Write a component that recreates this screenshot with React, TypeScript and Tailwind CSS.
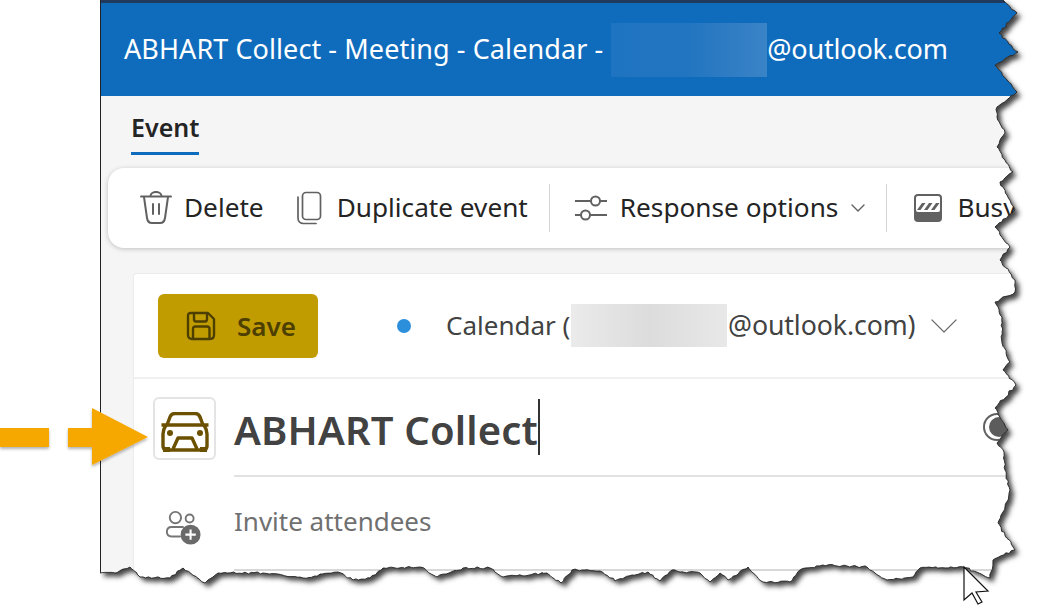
import React from "react";

// key points of the torn screenshot edge, read off the picture
const tear: [number, number][] = [
  [1003, 0], [1017, 13], [999, 33], [1018, 52], [995, 65], [1007, 80], [1017, 92], [997, 107], [997, 117],
  [1005, 133], [997, 147], [1013, 172], [1000, 182], [1007, 195], [1015, 210], [995, 227], [1010, 247],
  [1000, 260], [1015, 280], [1015, 292], [995, 302], [1002, 317], [1002, 343], [1010, 362], [1003, 370],
  [1016, 385], [995, 408], [1008, 430], [997, 443], [1004, 452], [1005, 470], [1010, 490], [1005, 507],
  [998, 523], [1015, 550], [993, 560], [990, 578], [963, 567], [920, 568], [913, 577], [887, 580],
  [875, 573], [867, 567], [823, 565], [800, 570], [790, 582], [763, 582], [748, 567], [728, 580],
  [720, 573], [710, 582], [700, 573], [680, 572], [672, 570], [660, 581], [648, 572], [632, 575],
  [615, 581], [600, 571], [585, 570], [572, 570], [561, 583], [547, 573], [503, 577], [490, 568],
  [463, 568], [437, 577], [420, 567], [383, 568], [370, 578], [353, 580], [338, 572], [303, 578],
  [263, 573], [218, 573], [205, 583], [183, 568], [170, 578], [140, 577], [130, 567], [115, 573], [100, 573],
];

// breaks the straight runs up a little so the line looks rough
function roughen(points: [number, number][]) {
  let seed = 7;
  const next = () => {
    seed = (seed * 9301 + 49297) % 233280;
    return seed / 233280 - 0.5;
  };
  let d = `M${points[0][0]} ${points[0][1]}`;
  for (let i = 1; i < points.length; i++) {
    const [ax, ay] = points[i - 1];
    const [bx, by] = points[i];
    const steps = Math.max(1, Math.round(Math.hypot(bx - ax, by - ay) / 3));
    for (let s = 1; s <= steps; s++) {
      const t = s / steps;
      const j = s === steps ? 0 : 2;
      d += `L${(ax + (bx - ax) * t + next() * j).toFixed(1)} ${(ay + (by - ay) * t + next() * j).toFixed(1)}`;
    }
  }
  return d;
}

const edge = roughen(tear);
const outside = `${edge}L100 608L1040 608L1040 0Z`;
const inside = `${edge}L100 0Z`;

function TornEdge() {
  return (
    <svg className="absolute inset-0" width={1040} height={608} viewBox="0 0 1040 608">
      <defs>
        <clipPath id="outside">
          <path d={outside} />
        </clipPath>
        <filter id="soft" x="-5%" y="-5%" width="110%" height="110%">
          <feGaussianBlur stdDeviation="2.4" />
        </filter>
      </defs>
      <path d={outside} fill="#fff" />
      <g clipPath="url(#outside)">
        <path d={inside} fill="#444" filter="url(#soft)" transform="translate(4 4)" />
      </g>
      <path d={edge} fill="none" stroke="#222" strokeWidth="0.9" />
      {/* mouse pointer */}
      <path d="M964 567V600L972 593L978 604L982 602L976 592L988 591Z" fill="#fff" stroke="#111" strokeWidth="1.2" strokeLinejoin="miter" />
    </svg>
  );
}

function Arrows() {
  return (
    <svg className="absolute left-0 top-[400px]" width={155} height={72} viewBox="0 0 155 72">
      <defs>
        <filter id="arrowShadow" x="-10%" y="-10%" width="120%" height="130%">
          <feDropShadow dx="0" dy="2" stdDeviation="1.5" floodColor="#000" floodOpacity="0.3" />
        </filter>
      </defs>
      <g fill="#f7a806" filter="url(#arrowShadow)">
        <rect x="0" y="28" width="49" height="19" />
        <path d="M68 28H92V8L148 37L92 65V47H68Z" />
      </g>
    </svg>
  );
}

function Chevron({ w, h, color, sw }: { w: number; h: number; color: string; sw: number }) {
  return (
    <svg width={w} height={h} viewBox={`0 0 ${w} ${h}`} fill="none" stroke={color} strokeWidth={sw} strokeLinecap="round" strokeLinejoin="round">
      <path d={`M1 1L${w / 2} ${h - 1}L${w - 1} 1`} />
    </svg>
  );
}

function TrashIcon() {
  return (
    <svg width={34} height={34} viewBox="0 0 34 34" fill="none" stroke="#616161" strokeWidth="2" strokeLinecap="round" strokeLinejoin="round">
      <path d="M2 5.5H32" />
      <path d="M11.5 5C11.5 -0.4 22.5 -0.4 22.5 5" />
      <path d="M5 6L8 27C8.5 30.5 10.5 32 13 32H21C23.5 32 25.5 30.5 26 27L29 6" />
      <path d="M14 13V23M20 13V23" />
    </svg>
  );
}

function DuplicateIcon() {
  return (
    <svg width={26} height={34} viewBox="0 0 26 34" fill="none" stroke="#616161" strokeWidth="1.7">
      <rect x="6.5" y="1.5" width="18" height="27" rx="3.5" />
      <path d="M2 6V27C2 30.5 4.5 32.5 7.5 32.5H20" strokeLinecap="round" />
    </svg>
  );
}

function SlidersIcon() {
  return (
    <svg width={32} height={30} viewBox="0 0 32 30" fill="none" stroke="#616161" strokeWidth="2">
      <path d="M0 8H16M25 8H32M0 22H6M15 22H32" />
      <circle cx="20.5" cy="8" r="4.5" />
      <circle cx="10.5" cy="22" r="4.5" />
    </svg>
  );
}

function BusyIcon() {
  return (
    <svg width={28} height={28} viewBox="0 0 28 28">
      <rect width="28" height="28" rx="4" fill="#616161" />
      <rect x="2" y="2" width="24" height="16" rx="2" fill="#fff" />
      <path d="M3 16L8 9H11.5L6.5 16ZM10 16L15 9H18.5L13.5 16ZM17 16L22 9H25.5L20.5 16Z" fill="#616161" />
    </svg>
  );
}

function SaveIcon() {
  return (
    <svg width={30} height={30} viewBox="0 0 30 30" fill="none" stroke="#4d3f00" strokeWidth="2.4" strokeLinejoin="round">
      <path d="M5 2H22L28 8V24C28 26.5 26.5 28 24 28H6C3.5 28 2 26.5 2 24V5C2 3 3 2 5 2Z" />
      <path d="M8 2V8C8 9.5 9 10.5 10 10.5H19C20.5 10.5 21 9.5 21 8V2" />
      <path d="M7 28V18C7 16.5 8 15.5 9.5 15.5H21C22.5 15.5 23.5 16.5 23.5 18V28" />
    </svg>
  );
}

function CarIcon() {
  return (
    <svg width={48} height={40} viewBox="0 0 48 40" fill="none" stroke="#6b5000" strokeWidth="3.4" strokeLinejoin="round">
      <path d="M6 13L9 5C10 2.5 12 1.5 14 1.5H34C36 1.5 38 2.5 39 5L42 13" />
      <path d="M0.5 13H47.5" />
      <path d="M5 13C2.5 17 2 19 2 22V34C2 36.5 3.5 38 6 38H42C44.5 38 46 36.5 46 34V22C46 19 45.5 17 43 13" />
      <path d="M12 37L17 26H31L36 37" />
      <path d="M2 35H9V40H2ZM39 35H46V40H39Z" fill="#6b5000" stroke="none" />
      <circle cx="9" cy="21" r="3" fill="#6b5000" stroke="none" />
      <circle cx="39" cy="21" r="3" fill="#6b5000" stroke="none" />
    </svg>
  );
}

function InviteIcon() {
  return (
    <svg width={36} height={36} viewBox="0 0 38 38" fill="none" stroke="#757575" strokeWidth="2">
      <circle cx="11" cy="8" r="6" />
      <circle cx="26" cy="9" r="4.2" />
      <path d="M19 18H7C4 18 2 20 2 23C2 26 4 28 7 28H16" strokeLinecap="round" />
      <circle cx="27" cy="26" r="10.5" fill="#6a6a6a" stroke="none" />
      <path d="M27 20.5V31.5M21.5 26H32.5" stroke="#fff" strokeWidth="2.2" />
    </svg>
  );
}

function ToolButton({ icon, label, gap }: { icon: React.ReactNode; label: string; gap: string }) {
  return (
    <div className={`flex items-center whitespace-nowrap text-[#242424] ${gap}`}>
      {icon}
      <span>{label}</span>
    </div>
  );
}

export default function App() {
  return (
    <div className="relative h-[608px] w-[1040px] overflow-hidden bg-white pl-[100px] font-['Noto_Sans','Open_Sans',sans-serif]">
      <div className="flex h-full flex-col border-l border-[#222] bg-[#f5f5f5]">
        <header className="flex h-[96px] shrink-0 items-center whitespace-nowrap border-t-[3px] border-[#1f3a5c] bg-[#0f6cbd] pl-[23px] text-[27px] text-white">
          <span className="tracking-[0.08px]">ABHART Collect - Meeting - Calendar -</span>
          <span className="ml-[8px] h-[54px] w-[156px] bg-gradient-to-r from-[#1f74c1] via-[#2275c0] to-[#3a83c7]" />
          <span className="tracking-[-0.2px]">@outlook.com</span>
        </header>

        <div className="h-[72px] shrink-0 pl-[30px] pt-[13px]">
          <div className="inline-block border-b-[3px] border-[#0f6cbd] pb-[7px] text-[25px] font-semibold leading-[36px] text-[#242424]">
            Event
          </div>
        </div>

        <div className="ml-[7px] flex h-[80px] shrink-0 items-center whitespace-nowrap rounded-l-2xl bg-white pl-[31px] text-[26.2px] shadow-[0_1px_5px_rgba(0,0,0,0.22)]">
          <ToolButton icon={<TrashIcon />} label="Delete" gap="gap-[11px]" />
          <div className="ml-[32px]" />
          <ToolButton icon={<DuplicateIcon />} label="Duplicate event" gap="gap-[15px]" />
          <div className="ml-[21px] h-[48px] w-px bg-[#d6d6d6]" />
          <div className="ml-[25px]" />
          <ToolButton icon={<SlidersIcon />} label="Response options" gap="gap-[13px]" />
          <div className="ml-[13px]">
            <Chevron w={14} h={8} color="#616161" sw={1.4} />
          </div>
          <div className="ml-[21px] h-[48px] w-px bg-[#d6d6d6]" />
          <div className="ml-[27px]" />
          <ToolButton icon={<BusyIcon />} label="Busy" gap="gap-[15px]" />
        </div>

        <div className="ml-[32px] mt-[25px] flex-1 rounded-tl border-l border-t border-[#ececec] bg-white">
          <div className="flex h-[105px] items-center whitespace-nowrap border-b-2 border-[#f0f0f0] pl-[24px]">
            <button className="flex h-[64px] w-[160px] items-center gap-[21px] rounded-md bg-[#c19c00] pl-[28px] text-[26px] font-semibold text-[#4d3f00]">
              <SaveIcon />
              <span className="pt-[2px]">Save</span>
            </button>
            <span className="ml-[79px] h-[14px] w-[14px] rounded-full bg-[#2b8fdc]" />
            <span className="ml-[35px] w-[125px] text-[26px] text-[#424242]">Calendar (</span>
            <span className="h-[43px] w-[156px] bg-gradient-to-r from-[#ebebeb] via-[#dcdcdc] to-[#e8e8e8]" />
            <span className="ml-px text-[26.7px] tracking-[-0.1px] text-[#424242]">@outlook.com)</span>
            <div className="ml-[16px]">
              <Chevron w={26} h={14} color="#707070" sw={1.2} />
            </div>
          </div>

          <div className="flex">
            <div className="flex w-[100px] shrink-0 items-center pl-[19px]">
              <div className="flex h-[63px] w-[63px] items-end justify-center rounded-md border-2 border-[#e4e4e4] pb-[6px]">
                <CarIcon />
              </div>
            </div>
            <div className="flex h-[98px] flex-1 items-center justify-between border-b-2 border-[#e2e2e2] pr-[29px]">
              <div className="flex items-center">
                <span className="pt-[5px] text-[40px] font-semibold tracking-[0.15px] text-[#424242]">ABHART Collect</span>
                <span className="h-[56px] w-[2px] bg-[#333]" />
              </div>
              <span className="flex h-[28px] w-[28px] items-center justify-end rounded-full border-2 border-[#616161]">
                <span className="h-[20px] w-[20px] rounded-full bg-[#5c5c5c]" />
              </span>
            </div>
          </div>

          <div className="flex">
            <div className="flex w-[100px] shrink-0 items-center pl-[31px] pt-[8px]">
              <InviteIcon />
            </div>
            <div className="flex h-[94px] flex-1 items-center border-b-2 border-[#d8d8d8] pb-[4px] text-[26px] text-[#707070]">
              Invite attendees
            </div>
          </div>
        </div>
      </div>

      <Arrows />
      <TornEdge />
    </div>
  );
}
